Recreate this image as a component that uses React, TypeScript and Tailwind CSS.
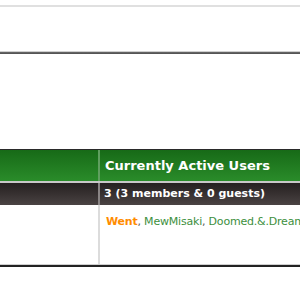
export default function App() {
  return (
    <div className="h-[300px] w-[300px] overflow-hidden bg-white font-['DejaVu_Sans',Verdana,sans-serif]">
      <div className="h-[5px]" />
      <div className="h-[2px] bg-[#e0e0e0]" />
      <div className="h-[44px]" />
      <div className="h-[1px] bg-[#cfcfcf]" />
      <div className="h-[2px] bg-gradient-to-b from-[#6a6a6a] to-[#4f4f4f]" />
      <div className="h-[95px]" />
      <div className="w-[320px]">
        <div className="h-[1px] bg-[#2a2a2a]" />
        <div className="grid grid-cols-[100px_1fr]">
          <div className="h-[31px] border-r-2 border-[#5f9f5f] bg-gradient-to-b from-[#176a17] to-[#2a8c2a]" />
          <div className="flex h-[31px] items-center bg-gradient-to-b from-[#176a17] to-[#2a8c2a] pl-[5px] text-[13px] font-semibold text-white">
            Currently Active Users
          </div>
        </div>
        <div className="h-[2px] bg-[#c8c8c8]" />
        <div className="grid grid-cols-[100px_1fr]">
          <div className="h-[22px] border-r-2 border-[#8a8585] bg-gradient-to-b from-[#252020] to-[#4a4343]" />
          <div className="flex h-[22px] items-center whitespace-nowrap bg-gradient-to-b from-[#252020] to-[#4a4343] pl-[4px] text-[11px] font-bold text-white">
            3 (3 members &amp; 0 guests)
          </div>
        </div>
        <div className="grid grid-cols-[100px_1fr]">
          <div className="h-[59px] border-r-2 border-[#dcdcdc]" />
          <div className="h-[59px] whitespace-nowrap pl-[6px] pt-[9px] text-[11px] tracking-[-0.2px] text-[#3d8f3d]">
            <span className="font-bold text-[#ff8c00]">Went</span>
            <span className="text-[#555]">, </span>
            MewMisaki
            <span className="text-[#555]">, </span>
            Doomed.&amp;.Dreamer
          </div>
        </div>
        <div className="h-[1px] bg-[#cfcfcf]" />
        <div className="h-[2px] bg-[#222]" />
      </div>
    </div>
  )
}
